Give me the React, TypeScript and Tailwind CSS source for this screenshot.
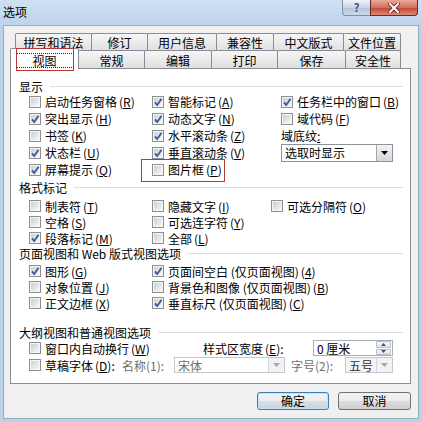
import type { ReactNode } from "react";

function K({ c }: { c: string }) {
  return (
    <span className="ml-[2px]">
      (<span className="underline underline-offset-[1px]">{c}</span>)
    </span>
  );
}

function Box({ on }: { on?: boolean }) {
  return (
    <span className="relative flex h-[12px] w-[12px] shrink-0 items-center justify-center border border-[#8e8f8f] bg-[#f6f6f6]">
      <span className="h-[8px] w-[8px] bg-linear-to-br from-[#cbced3] to-[#f8f8f8]" />
      {on && (
        <svg viewBox="0 0 12 12" className="absolute left-[-1px] top-[-1px] h-[12px] w-[12px]">
          <path d="M3 6.3 L5.2 9 L9.6 2.8" fill="none" stroke="#3f5b98" strokeWidth="1.9" />
        </svg>
      )}
    </span>
  );
}

function Check({ on, children }: { on?: boolean; children: ReactNode }) {
  return (
    <div className="flex items-center gap-[4px] whitespace-nowrap">
      <Box on={on} />
      <span className="leading-[13px]">{children}</span>
    </div>
  );
}

function Group({ title, className, children }: { title: string; className?: string; children: ReactNode }) {
  return (
    <div className={className}>
      <div className="flex h-[14px] items-center pl-[8px] pr-[7px]">
        <span className="whitespace-nowrap leading-[13px]">{title}</span>
        <span className="ml-[7px] h-px flex-1 bg-[#d5dfe5]" />
      </div>
      {children}
    </div>
  );
}

function Arrow({ dim }: { dim?: boolean }) {
  return (
    <span
      className={
        "flex h-full w-[16px] items-center justify-center border-l " +
        (dim ? "border-[#d8d8d8] bg-[#f2f2f2]" : "border-[#a7a7a7] bg-[linear-gradient(#f4f4f4,#d6d6d6)]")
      }
    >
      <svg viewBox="0 0 7 4" className="h-[4px] w-[7px]">
        <path d="M0 0 H7 L3.5 4 Z" fill={dim ? "#a8a8a8" : "#000"} />
      </svg>
    </span>
  );
}

const row1 = [
  ["拼写和语法", "w-[77px]"],
  ["修订", "w-[57px]"],
  ["用户信息", "w-[70px]"],
  ["兼容性", "w-[58px]"],
  ["中文版式", "w-[71px]"],
  ["文件位置", "w-[58px]"],
];

const row2 = [
  ["常规", "w-[67px]"],
  ["编辑", "w-[68px]"],
  ["打印", "w-[67px]"],
  ["保存", "w-[69px]"],
  ["安全性", "w-[56px]"],
];

const tab =
  "-ml-px flex h-[18px] shrink-0 items-center justify-center rounded-t-[2px] border border-b-0 border-[#898c95] bg-[linear-gradient(#f6f6f6,#dfdfdf)]";

export default function App() {
  return (
    <div className="flex h-[422px] w-[422px] flex-col overflow-hidden bg-[#bcd2ea] font-['Noto_Sans_CJK_SC',sans-serif] text-[12px] leading-[14px] text-black">
      {/* title bar */}
      <div className="flex h-[25px] shrink-0 items-start justify-between bg-[linear-gradient(#cfe0f3,#bdd3ec)]">
        <span className="pl-[3px] pt-[5px] text-[12px] leading-[14px]">选项</span>
        <div className="mr-[4px] flex h-[16px]">
          <div className="flex w-[29px] items-center justify-center rounded-bl-[4px] border border-t-0 border-[#7d8ea5] bg-[linear-gradient(#eef3f9,#c9d6e6_50%,#b3c4da_51%,#cbd9ea)] text-[11px] font-bold leading-none text-[#3e5270]">
            ?
          </div>
          <div className="-ml-px flex w-[48px] items-center justify-center rounded-br-[4px] border border-t-0 border-[#6b2a22] bg-[linear-gradient(#e9a898,#d27060_50%,#c4402e_51%,#dd8a78)]">
            <svg viewBox="0 0 12 10" className="h-[10px] w-[12px]">
              <path d="M2 1 L10 9 M10 1 L2 9" stroke="#5e1f16" strokeWidth="3.6" strokeLinecap="square" />
              <path d="M2 1 L10 9 M10 1 L2 9" stroke="#fff" strokeWidth="2" strokeLinecap="square" />
            </svg>
          </div>
        </div>
      </div>

      {/* client area */}
      <div className="mx-[3px] flex h-[394px] shrink-0 flex-col border border-[#9aabbf] bg-[#f0f0f0] pt-[7px]">
        <div className="relative ml-[6px] w-[401px]">
          {/* tab rows */}
          <div className="flex h-[17px] pl-[6px]">
            {row1.map(([t, w]) => (
              <div key={t} className={tab + " " + w}>
                {t}
              </div>
            ))}
          </div>
          <div className="flex h-[18px] items-start">
            <div className="relative z-10 -mt-[2px] flex h-[21px] w-[69px] shrink-0 items-start justify-center rounded-t-[2px] border border-b-0 border-[#898c95] bg-white pt-[4px]">
              <span className="flex h-[15px] w-[58px] items-center justify-center border border-dotted border-[#222]">视图</span>
            </div>
            {row2.map(([t, w]) => (
              <div key={t} className={tab + " " + w + " pt-[2px]"}>
                {t}
              </div>
            ))}
          </div>
          <div className="pointer-events-none absolute left-[6px] top-[15px] z-20 h-[23px] w-[58px] border border-[#b43a3a]" />

          {/* panel */}
          <div className="h-[316px] border border-[#898c95] bg-white pt-[10px]">
            <Group title="显示">
              <div className="flex flex-col pl-[18px]">
                <div className="flex h-[17px] items-center">
                  <div className="w-[123px]"><Check>启动任务窗格<K c="R" /></Check></div>
                  <div className="w-[129px]"><Check on>智能标记<K c="A" /></Check></div>
                  <Check on>任务栏中的窗口<K c="B" /></Check>
                </div>
                <div className="flex h-[17px] items-center">
                  <div className="w-[123px]"><Check on>突出显示<K c="H" /></Check></div>
                  <div className="w-[129px]"><Check on>动态文字<K c="N" /></Check></div>
                  <Check>域代码<K c="F" /></Check>
                </div>
                <div className="flex h-[17px] items-center">
                  <div className="w-[123px]"><Check>书签<K c="K" /></Check></div>
                  <div className="w-[129px]"><Check on>水平滚动条<K c="Z" /></Check></div>
                  <span className="leading-[13px]">域底纹<span className="underline">:</span></span>
                </div>
                <div className="flex h-[17px] items-center">
                  <div className="w-[123px]"><Check on>状态栏<K c="U" /></Check></div>
                  <div className="w-[129px]"><Check on>垂直滚动条<K c="V" /></Check></div>
                  <div className="flex h-[18px] w-[112px] items-center border border-[#8d939c] bg-white pl-[3px]">
                    <span className="flex-1">选取时显示</span>
                    <Arrow />
                  </div>
                </div>
                <div className="flex h-[17px] items-center">
                  <div className="w-[123px]"><Check on>屏幕提示<K c="Q" /></Check></div>
                  <div className="relative w-[129px]">
                    <Check>图片框<K c="P" /></Check>
                    <div className="pointer-events-none absolute left-[-11px] top-[-4px] h-[23px] w-[84px] border border-[#b43a3a]" />
                  </div>
                </div>
              </div>
            </Group>

            <Group title="格式标记" className="mt-[2px]">
              <div className="mt-[4px] flex flex-col pl-[18px]">
                <div className="flex h-[16px] items-center">
                  <div className="w-[123px]"><Check>制表符<K c="T" /></Check></div>
                  <div className="w-[119px]"><Check>隐藏文字<K c="I" /></Check></div>
                  <Check>可选分隔符<K c="O" /></Check>
                </div>
                <div className="flex h-[16px] items-center">
                  <div className="w-[123px]"><Check>空格<K c="S" /></Check></div>
                  <Check>可选连字符<K c="Y" /></Check>
                </div>
                <div className="flex h-[16px] items-center">
                  <div className="w-[123px]"><Check on>段落标记<K c="M" /></Check></div>
                  <Check>全部<K c="L" /></Check>
                </div>
              </div>
            </Group>

            <Group title="页面视图和 Web 版式视图选项">
              <div className="mt-[3px] flex flex-col pl-[18px]">
                <div className="flex h-[16px] items-center">
                  <div className="w-[123px]"><Check on>图形<K c="G" /></Check></div>
                  <Check on>页面间空白 (仅页面视图)<K c="4" /></Check>
                </div>
                <div className="flex h-[16px] items-center">
                  <div className="w-[123px]"><Check>对象位置<K c="J" /></Check></div>
                  <Check>背景色和图像 (仅页面视图)<K c="B" /></Check>
                </div>
                <div className="flex h-[16px] items-center">
                  <div className="w-[123px]"><Check>正文边框<K c="X" /></Check></div>
                  <Check on>垂直标尺 (仅页面视图)<K c="C" /></Check>
                </div>
              </div>
            </Group>

            <Group title="大纲视图和普通视图选项" className="mt-[14px]">
              <div className="mt-[1px] flex flex-col pl-[18px]">
                <div className="flex h-[16px] items-center">
                  <div className="w-[174px]"><Check>窗口内自动换行<K c="W" /></Check></div>
                  <span className="w-[110px] whitespace-nowrap leading-[13px]">样式区宽度<K c="E" />:</span>
                  <div className="flex h-[16px] w-[80px] items-center border border-[#abadb3] bg-white pl-[3px]">
                    <span className="flex-1 leading-[13px]">0 厘米</span>
                    <div className="mr-px flex h-[14px] w-[15px] flex-col gap-px">
                      <span className="flex flex-1 items-center justify-center rounded-[1px] border border-[#b5bfcb] bg-[linear-gradient(#f5f8fb,#dde5ee)]">
                        <svg viewBox="0 0 5 3" className="h-[3px] w-[5px]"><path d="M0 3 L2.5 0 L5 3 Z" fill="#44546a" /></svg>
                      </span>
                      <span className="flex flex-1 items-center justify-center rounded-[1px] border border-[#b5bfcb] bg-[linear-gradient(#f5f8fb,#dde5ee)]">
                        <svg viewBox="0 0 5 3" className="h-[3px] w-[5px]"><path d="M0 0 H5 L2.5 3 Z" fill="#44546a" /></svg>
                      </span>
                    </div>
                  </div>
                </div>
                <div className="flex h-[18px] items-center">
                  <div className="flex w-[145px] items-center gap-[4px] whitespace-nowrap">
                    <Box />
                    <span className="w-[73px] leading-[13px]">草稿字体<K c="D" />:</span>
                    <span className="leading-[13px] text-[#6d6d6d]">名称(1):</span>
                  </div>
                  <div className="flex h-[16px] w-[111px] items-center border border-[#c4c7cc] bg-white pl-[3px] text-[#6d6d6d]">
                    <span className="flex-1 leading-[13px]">宋体</span>
                    <Arrow dim />
                  </div>
                  <span className="ml-[6px] w-[54px] leading-[13px] text-[#6d6d6d]">字号(2):</span>
                  <div className="flex h-[16px] w-[48px] items-center border border-[#c4c7cc] bg-[#f4f4f4] pl-[3px] text-[#333]">
                    <span className="flex-1 leading-[13px]">五号</span>
                    <Arrow dim />
                  </div>
                </div>
              </div>
            </Group>
          </div>
        </div>

        {/* buttons */}
        <div className="mt-[8px] flex justify-end gap-[9px] pr-[7px]">
          <button className="h-[18px] w-[72px] rounded-[3px] border border-[#3c7fb1] bg-[linear-gradient(#f3f6f8,#e9edf0_50%,#d7dee4_51%,#ccd4da)] text-[12px] leading-none shadow-[inset_0_0_0_1px_#bfe2f7]">
            确定
          </button>
          <button className="h-[18px] w-[73px] rounded-[3px] border border-[#707070] bg-[linear-gradient(#f2f2f2,#ebebeb_50%,#dddddd_51%,#cfcfcf)] text-[12px] leading-none">
            取消
          </button>
        </div>
      </div>
    </div>
  );
}
